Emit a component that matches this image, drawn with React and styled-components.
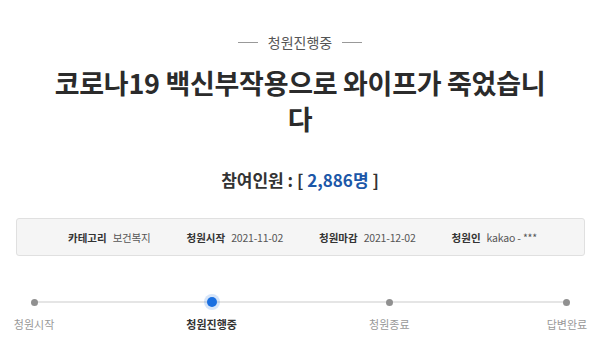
import React from "react";
import styled, { createGlobalStyle } from "styled-components";

const GlobalStyle = createGlobalStyle`
    html, body {
        margin: 0;
        padding: 0;
        background: #fff;
        font-family: "Noto Sans CJK KR", "Noto Sans", sans-serif;
        color: #222;
    }
`;

const Page = styled.div`
    width: 600px;
    height: 362px;
    overflow: hidden;
    display: flex;
    flex-direction: column;
    align-items: center;
`;

const Status = styled.div`
    margin-top: 32px;
    display: flex;
    align-items: center;
    gap: 10px;
    font-size: 14px;
    color: #555;
    line-height: 20px;

    &::before, &::after {
        content: "";
        width: 20px;
        height: 1px;
        background: #999;
    }
`;

const Title = styled.h1`
    margin: 13px 0 0;
    width: 496px;
    text-align: center;
    font-size: 27px;
    font-weight: 700;
    line-height: 36px;
    letter-spacing: -0.3px;
    color: #2b2b2b;
`;

const Count = styled.div`
    margin-top: 31px;
    font-size: 17px;
    font-weight: 700;
    line-height: 24px;
    color: #333;

    strong {
        color: #1c57a8;
        font-weight: 700;
    }
`;

const InfoBox = styled.div`
    margin-top: 26px;
    box-sizing: border-box;
    width: 569px;
    height: 38px;
    margin-left: 1px;
    background: #f5f5f5;
    border: 1px solid #e0e0e0;
    border-radius: 3px;
    display: flex;
    align-items: center;
    padding-left: 51px;
    gap: 36px;
    font-size: 10.5px;
`;

const InfoItem = styled.div`
    display: flex;
    gap: 6px;
    align-items: center;

    b {
        color: #333;
        font-weight: 700;
    }
    span {
        color: #555;
        letter-spacing: -0.2px;
    }
`;

const Steps = styled.div`
    margin-top: 37px;
    box-sizing: border-box;
    width: 600px;
    padding: 0 13px 0 14px;
    display: flex;
    justify-content: space-between;
    position: relative;
`;

const Track = styled.div`
    position: absolute;
    left: 34px;
    right: 33px;
    top: 8px;
    height: 2px;
    background: #e5e5e5;
`;

const Step = styled.div`
    width: 40px;
    display: flex;
    flex-direction: column;
    align-items: center;
    position: relative;
    z-index: 1;
    white-space: nowrap;
`;

const Dot = styled.div`
    width: ${p => (p.$active ? 10 : 7)}px;
    height: ${p => (p.$active ? 10 : 7)}px;
    margin: ${p => (p.$active ? "4px 0" : "5.5px 0")};
    border-radius: 50%;
    background: ${p => (p.$active ? "#1a6fe0" : "#909090")};
    box-shadow: ${p => (p.$active ? "0 0 0 3px rgba(26,111,224,0.18)" : "none")};
`;

const StepLabel = styled.div`
    margin-top: 5px;
    font-size: 11px;
    line-height: 16px;
    color: ${p => (p.$active ? "#333" : "#999")};
    font-weight: ${p => (p.$active ? 700 : 400)};
`;

const steps = [
    { label: "청원시작" },
    { label: "청원진행중", active: true },
    { label: "청원종료" },
    { label: "답변완료" },
];

export default function App() {
    return (
        <Page>
            <GlobalStyle />
            <Status>청원진행중</Status>
            <Title>코로나19 백신부작용으로 와이프가 죽었습니다</Title>
            <Count>
                참여인원 : [ <strong>2,886명</strong> ]
            </Count>
            <InfoBox>
                <InfoItem><b>카테고리</b><span>보건복지</span></InfoItem>
                <InfoItem><b>청원시작</b><span>2021-11-02</span></InfoItem>
                <InfoItem><b>청원마감</b><span>2021-12-02</span></InfoItem>
                <InfoItem><b>청원인</b><span>kakao - ***</span></InfoItem>
            </InfoBox>
            <Steps>
                <Track />
                {steps.map(s => (
                    <Step key={s.label}>
                        <Dot $active={s.active} />
                        <StepLabel $active={s.active}>{s.label}</StepLabel>
                    </Step>
                ))}
            </Steps>
        </Page>
    );
}
